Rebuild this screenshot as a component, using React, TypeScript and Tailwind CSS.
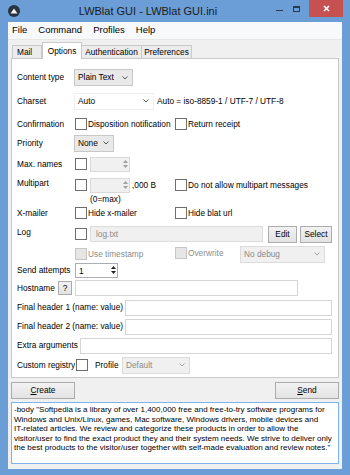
import React from 'react';

const font = "font-['Liberation_Sans',Arial,sans-serif]";

function Chevron({ className = '' }: { className?: string }) {
  return (
    <svg width="6" height="4" viewBox="0 0 6 4" className={className}>
      <path d="M0.5 0.5 L3 3 L5.5 0.5" fill="none" stroke="currentColor" strokeWidth="0.9" />
    </svg>
  );
}

function Check({ disabled = false }: { disabled?: boolean }) {
  return (
    <span
      className={
        'inline-block h-[12px] w-[12px] shrink-0 border ' +
        (disabled ? 'border-[#c6c6c6] bg-[#e6e6e6]' : 'border-[#6f6f6f] bg-white')
      }
    />
  );
}

function CheckLabel({ text, disabled = false, className = '' }: { text: string; disabled?: boolean; className?: string }) {
  return (
    <div className={'flex items-center ' + className}>
      <Check disabled={disabled} />
      <span className={'ml-[1px] ' + (disabled ? 'text-[#8d8d8d]' : '')}>{text}</span>
    </div>
  );
}

function Combo({ text, w, kind }: { text: string; w: string; kind: 'gray' | 'white' | 'off' }) {
  const look =
    kind === 'gray'
      ? 'bg-[#e9e9e9] border-[#c8c8c8] text-black'
      : kind === 'white'
      ? 'bg-white border-[#f0f0f0] text-black'
      : 'bg-[#f0f0f0] border-[#dcdcdc] text-[#8a8a8a]';
  return (
    <div className={'flex h-[17px] items-center justify-between border pl-[3px] pr-[4px] ' + look + ' ' + w}>
      <span>{text}</span>
      <Chevron className={kind === 'off' ? 'text-[#9a9a9a]' : 'text-[#444]'} />
    </div>
  );
}

function Spin({ w, value = '', disabled = false }: { w: string; value?: string; disabled?: boolean }) {
  return (
    <div
      className={
        'flex h-[15px] items-stretch border ' +
        (disabled ? 'border-[#d9d9d9] bg-[#f0f0f0]' : 'border-[#abadb3] bg-white') +
        ' ' +
        w
      }
    >
      <span className="flex-1 pl-[3px] leading-[14px]">{value}</span>
      <div className={'flex w-[7px] flex-col items-center justify-center gap-[2px] ' + (disabled ? 'text-[#a0a0a0]' : 'text-[#222]')}>
        <svg width="5" height="3" viewBox="0 0 5 3">
          <path d="M0 3 L2.5 0 L5 3 Z" fill="currentColor" />
        </svg>
        <svg width="5" height="3" viewBox="0 0 5 3">
          <path d="M0 0 L2.5 3 L5 0 Z" fill="currentColor" />
        </svg>
      </div>
    </div>
  );
}

function Field({ w, value = '', disabled = false }: { w: string; value?: string; disabled?: boolean }) {
  return (
    <div
      className={
        'h-[16px] border pl-[5px] leading-[14px] ' +
        (disabled ? 'border-[#dcdcdc] bg-[#f0f0f0] text-[#8a8a8a]' : 'border-[#d5d5d5] bg-white') +
        ' ' +
        w
      }
    >
      {value}
    </div>
  );
}

function Btn({ children, w, h = 'h-[17px]' }: { children: React.ReactNode; w: string; h?: string }) {
  return (
    <div
      className={
        'flex items-center justify-center border border-[#acacac] bg-gradient-to-b from-[#f2f2f2] to-[#e3e3e3] ' +
        w +
        ' ' +
        h
      }
    >
      {children}
    </div>
  );
}

export default function App() {
  return (
    <div className={'flex h-[475px] w-[350px] flex-col bg-[#6b9ed6] text-[8.3px] text-black ' + font}>
      {/* title bar */}
      <div className="flex h-[22px] items-center">
        <div className="ml-[8px] flex h-[12px] w-[12px] items-center justify-center rounded-full bg-[#2b3340]">
          <svg width="8" height="6" viewBox="0 0 8 6">
            <path d="M4 0.5 L7.5 5.5 L0.5 5.5 Z" fill="#f2f2f2" />
          </svg>
        </div>
        <div className="flex-1 text-center text-[11px] text-[#1b1b1b]">LWBlat GUI - LWBlat GUI.ini</div>
        <div className="flex h-[22px] items-start">
          <div className="mt-[10px] mr-[10px] h-[1px] w-[7px] bg-[#2a3a4e]" />
          <div className="mt-[6px] mr-[9px] h-[6px] w-[7px] border border-[#2a3a4e] border-t-2" />
          <div className="flex h-[17px] w-[34px] items-center justify-center bg-[#c75050] mr-[7px]">
            <svg width="7" height="7" viewBox="0 0 7 7">
              <path d="M1 1 L6 6 M6 1 L1 6" stroke="white" strokeWidth="1.6" />
            </svg>
          </div>
        </div>
      </div>

      {/* client area */}
      <div className="mx-[8px] flex flex-1 flex-col bg-[#f0f0f0]">
        {/* menu */}
        <div className="flex h-[18px] items-center gap-[11px] border-b border-[#e6e6e6] bg-[#f8f9fa] pl-[4px] text-[9.5px]">
          <span>File</span>
          <span>Command</span>
          <span>Profiles</span>
          <span>Help</span>
        </div>

        {/* tabs */}
        <div className="mt-[2px] flex h-[16px] items-end pl-[4px]">
          <div className="flex h-[13px] w-[30px] items-center border border-b-0 border-[#c9c9c9] bg-[#ececec] pl-[4px]">Mail</div>
          <div className="relative z-10 mb-[-1px] flex h-[17px] w-[40px] items-center justify-center border border-b-0 border-[#c9c9c9] bg-white">
            Options
          </div>
          <div className="flex h-[13px] w-[60px] items-center justify-center border border-b-0 border-l-0 border-[#c9c9c9] bg-[#ececec]">
            Authentication
          </div>
          <div className="flex h-[13px] w-[50px] items-center justify-center border border-b-0 border-l-0 border-[#c9c9c9] bg-[#ececec]">
            Preferences
          </div>
        </div>

        {/* options panel */}
        <div className="mx-[3px] flex flex-col border border-[#c9c9c9] bg-white pb-[2px] pl-[5px]">
          <div className="h-[8px]" />
          <div className="flex h-[21px] items-center">
            <span className="w-[57px]">Content type</span>
            <Combo text="Plain Text" w="w-[59px]" kind="gray" />
          </div>
          <div className="flex h-[26px] items-center">
            <span className="w-[57px]">Charset</span>
            <Combo text="Auto" w="w-[80px]" kind="white" />
            <span className="ml-[3px]">Auto = iso-8859-1 / UTF-7 / UTF-8</span>
          </div>
          <div className="flex h-[20px] items-center">
            <span className="w-[58px]">Confirmation</span>
            <CheckLabel text="Disposition notification" className="w-[100px]" />
            <CheckLabel text="Return receipt" />
          </div>
          <div className="flex h-[18px] items-center">
            <span className="w-[57px]">Priority</span>
            <Combo text="None" w="w-[40px]" kind="gray" />
          </div>
          <div className="flex h-[24px] items-center">
            <span className="w-[58px]">Max. names</span>
            <Check />
            <div className="ml-[3px]">
              <Spin w="w-[40px]" disabled />
            </div>
          </div>
          <div className="flex h-[18px] items-center">
            <span className="mb-[4px] w-[58px]">Multipart</span>
            <div className="flex w-[100px] items-center">
              <Check />
              <div className="ml-[3px]">
                <Spin w="w-[40px]" disabled />
              </div>
              <span className="ml-[2px]">,000 B</span>
            </div>
            <CheckLabel text="Do not allow multipart messages" />
          </div>
          <div className="flex h-[10px] items-center">
            <span className="ml-[73px] leading-[10px]">(0=max)</span>
          </div>
          <div className="flex h-[18px] items-center">
            <span className="w-[58px]">X-mailer</span>
            <CheckLabel text="Hide x-mailer" className="w-[100px]" />
            <CheckLabel text="Hide blat url" />
          </div>
          <div className="flex h-[24px] items-center">
            <span className="mb-[3px] w-[58px]">Log</span>
            <Check />
            <div className="ml-[3px]">
              <Field w="w-[173px]" value="log.txt" disabled />
            </div>
            <div className="ml-[5px]">
              <Btn w="w-[29px]">Edit</Btn>
            </div>
            <div className="ml-[3px]">
              <Btn w="w-[32px]">Select</Btn>
            </div>
          </div>
          <div className="flex h-[16px] items-center">
            <span className="w-[58px]" />
            <CheckLabel text="Use timestamp" disabled className="w-[100px]" />
            <CheckLabel text="Overwrite" disabled className="mb-[2px] w-[65px]" />
            <Combo text="No debug" w="w-[85px]" kind="off" />
          </div>
          <div className="flex h-[16px] items-center">
            <span className="w-[58px]">Send attempts</span>
            <Spin w="w-[43px]" value="1" />
          </div>
          <div className="flex h-[20px] items-center">
            <span className="w-[41px]">Hostname</span>
            <Btn w="w-[14px]" h="h-[14px]">?</Btn>
            <div className="ml-[3px]">
              <Field w="w-[223px]" />
            </div>
          </div>
          <div className="flex h-[19px] items-center">
            <span className="w-[108px]">Final header 1 (name: value)</span>
            <Field w="w-[207px]" />
          </div>
          <div className="flex h-[19px] items-center">
            <span className="w-[108px]">Final header 2 (name: value)</span>
            <Field w="w-[207px]" />
          </div>
          <div className="flex h-[19px] items-center">
            <span className="w-[63px]">Extra arguments</span>
            <Field w="w-[252px]" />
          </div>
          <div className="flex h-[20px] items-center">
            <span className="w-[59px]">Custom registry</span>
            <Check />
            <span className="ml-[7px] w-[27px]">Profile</span>
            <Combo text="Default" w="w-[68px]" kind="off" />
          </div>
        </div>

        {/* buttons */}
        <div className="mx-[3px] mt-[4px] flex justify-between">
          <Btn w="w-[64px]" h="h-[17px]">
            <span>
              <span className="underline">C</span>reate
            </span>
          </Btn>
          <Btn w="w-[64px]" h="h-[17px]">
            <span>
              <span className="underline">S</span>end
            </span>
          </Btn>
        </div>

        {/* body text */}
        <div className="mx-[3px] mt-[3px] h-[62px] overflow-hidden border border-[#7eb4ea] bg-white px-[2px] pt-[2px] text-[8px] leading-[9.5px] whitespace-nowrap">
          <div>-body "Softpedia is a library of over 1,400,000 free and free-to-try software programs for</div>
          <div>Windows and Unix/Linux, games, Mac software, Windows drivers, mobile devices and</div>
          <div>IT-related articles. We review and categorize these products in order to allow the</div>
          <div>visitor/user to find the exact product they and their system needs. We strive to deliver only</div>
          <div>the best products to the visitor/user together with self-made evaluation and review notes."</div>
        </div>
      </div>
      <div className="h-[6px]" />
    </div>
  );
}
